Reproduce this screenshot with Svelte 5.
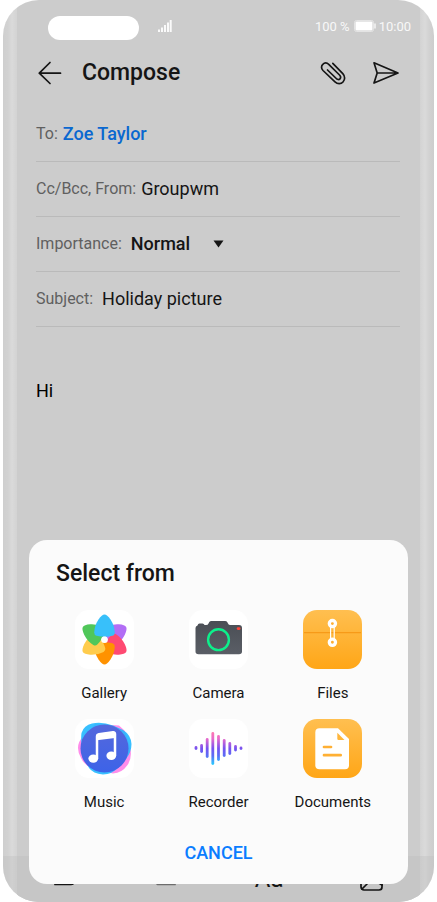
<script>
  let to = $state('Zoe Taylor');
  let from = $state('Groupwm');
  let importance = $state('Normal');
  let subject = $state('Holiday picture');
  let body = $state('Hi');

  const petals = [
    ['#b26ef5', 60],
    ['#ff4a72', 120],
    ['#ff9200', 180],
    ['#ffcc4d', 240],
    ['#50c75a', 300],
    ['#38c0fa', 0]
  ];

  const bars = [
    [7, 28, 30],
    [12.6, 26, 33],
    [18.2, 20, 38],
    [23.8, 14, 45],
    [29.5, 17, 41],
    [35.2, 21, 37],
    [40.8, 24, 35],
    [46.5, 27, 31.5],
    [52, 28.5, 30]
  ];

  const apps = ['Gallery', 'Camera', 'Files', 'Music', 'Recorder', 'Documents'];
</script>

<main class="phone">
  <div class="status">
    <span class="island"></span>
    <svg class="signal" width="14" height="12" viewBox="0 0 14 12" aria-hidden="true">
      <path d="M1 9.500V12M4 7.500V12M7 5V12M10 2.500V12M12.700 0V12" stroke="#fafafa" stroke-width="2" />
    </svg>
    <span class="percent">100 %</span>
    <svg class="battery" width="22" height="12" viewBox="0 0 22 12" aria-hidden="true">
      <rect x=".5" y=".5" width="19" height="11" rx="2" fill="none" stroke="#e4e4e4" />
      <rect x="1.500" y="1.500" width="17" height="9" rx="1" fill="#fff" />
      <path d="M21 3.500v5" stroke="#f4f4f4" stroke-width="1.500" />
    </svg>
    <span>10:00</span>
  </div>

  <header>
    <button class="icon" aria-label="Back">
      <svg width="26" height="26" viewBox="0 0 26 26"><path d="M14 2.500 3.300 13.200 14 23.500M3.300 13.200H24.500" /></svg>
    </button>
    <h1>Compose</h1>
    <button class="icon" aria-label="Attach">
      <svg width="26" height="26" viewBox="0 0 26 26">
        <path d="M12.800 3.300 22.800 13.600C25.400 16.400 25 20 23 22 21 24.200 17.500 24.200 15 21.900L3 10.500C1 8.500 1.200 5.800 2.800 4.300 4.400 2.700 7 2.700 9 4.600L19.500 15C21 16.500 20.900 18 20 18.900 19 19.900 17.500 19.700 16.300 18.500L7.500 10" />
      </svg>
    </button>
    <button class="icon" aria-label="Send">
      <svg width="28" height="26" viewBox="0 0 28 26"><path d="M2 2.800 26 13 2 23 5.200 13ZM5.200 13H26" /></svg>
    </button>
  </header>

  <form>
    <div class="row">
      <label for="to">To:</label>
      <input id="to" class="contact" bind:value={to} />
    </div>
    <div class="row">
      <label for="from">Cc/Bcc, From:</label>
      <input id="from" bind:value={from} />
    </div>
    <div class="row wide">
      <label for="importance">Importance:</label>
      <span class="picker">
        <select id="importance" bind:value={importance}>
          <option>Normal</option>
          <option>High</option>
          <option>Low</option>
        </select>
        <svg width="11" height="8" viewBox="0 0 11 8" aria-hidden="true"><path d="M.5 .5h10L5.500 7.500Z" fill="#151515" /></svg>
      </span>
    </div>
    <div class="row wide">
      <label for="subject">Subject:</label>
      <input id="subject" bind:value={subject} />
    </div>
    <textarea aria-label="Message" bind:value={body}></textarea>
  </form>

  <nav>
    <button aria-label="Folder">
      <svg width="26" height="26" viewBox="0 0 26 26"><path d="M3 24.500H19Q22 24.500 22 21V5H3Z" /></svg>
    </button>
    <button class="dim" aria-label="Copy">
      <svg width="26" height="26" viewBox="0 0 26 26"><path d="M22 24.500H6Q3 24.500 3 21V5H22Z" /></svg>
    </button>
    <button class="format">Aa</button>
    <button aria-label="Picture">
      <svg width="26" height="32" viewBox="0 0 26 32"><rect x="2" y="9" width="21" height="21" rx="3" /><path d="M3 29 13 19 23 25" /></svg>
    </button>
  </nav>

  <section class="sheet" role="dialog" aria-labelledby="sheet-title">
    <h2 id="sheet-title">Select from</h2>
    <div class="apps">
      {#each apps as app}
        <button class="app">
          <svg viewBox="0 0 59 59" aria-hidden="true">
            <defs>
              <linearGradient id="amber" x2="0" y2="1"><stop stop-color="#ffbf50" /><stop offset="1" stop-color="#ffa617" /></linearGradient>
              <linearGradient id="slate" x2="0" y2="1"><stop stop-color="#4a4e55" /><stop offset="1" stop-color="#5a5e66" /></linearGradient>
              <linearGradient id="indigo" x2="0" y2="1"><stop stop-color="#5568dc" /><stop offset="1" stop-color="#3d63e8" /></linearGradient>
              <linearGradient id="wave" gradientUnits="userSpaceOnUse" x1="0" y1="13" x2="0" y2="46">
                <stop stop-color="#ff79b0" /><stop offset=".2" stop-color="#e86bcb" /><stop offset=".5" stop-color="#7653f0" /><stop offset=".72" stop-color="#5b6df5" /><stop offset="1" stop-color="#26d0ff" />
              </linearGradient>
            </defs>
            <rect width="59" height="59" rx="14" fill={app === 'Files' || app === 'Documents' ? 'url(#amber)' : '#fff'} />
            {#if app === 'Gallery'}
              {#each petals as [fill, angle]}
                <path {fill} transform="rotate({angle} 29.500 29.500)" d="M29.500 4.500Q32 4.500 35.500 9.500 39.500 15.500 39.800 22.500 39.800 25 37.500 25.800 29.500 27.800 21.500 25.800 19.200 25 19.200 22.500 19.500 15.500 23.500 9.500 27 4.500 29.500 4.500Z" />
              {/each}
              <circle cx="29.500" cy="29.700" r="3.300" fill="#fff" />
            {:else if app === 'Camera'}
              <path fill="url(#slate)" d="M8.500 15.500Q9 13.500 10.500 13.500H13.500Q15 13.500 15.500 15H17Q19 15 19.500 13.500L20.300 12Q20.800 11 22.500 11H36Q37.700 11 38.200 12L39 13.500Q39.600 15 41.500 15H50Q53 15 53 18V41.500Q53 44.300 50 44.300H9.500Q6.500 44.300 6.500 41.500V18Q6.500 16 8.500 15.500Z" />
              <circle cx="29.500" cy="29.700" r="10.400" fill="none" stroke="#0df08b" stroke-width="2.400" />
              <rect x="47.700" y="17.300" width="3.800" height="2.600" rx="1.300" fill="#ff453a" />
            {:else if app === 'Files'}
              <path d="M1 22.600H58" stroke="#f79a18" stroke-width="1.200" />
              <path d="M27.600 14V32M31.200 14V32" stroke="#fff" stroke-width="1.200" />
              <g fill="#ffae31" stroke="#fff" stroke-width="3.300"><circle cx="29.400" cy="13.600" r="3.100" /><circle cx="29.400" cy="32.300" r="3.100" /></g>
            {:else if app === 'Music'}
              <path fill="#ff8dea" d="M3 29Q3 22 9 17L20 5 44 6.500 50 12 55.500 30Q57 40 52.500 46 47 54 38 54.500L18 50Q9 46 6 39 3 34 3 29Z" />
              <path fill="#24b9ff" d="M6.500 14Q9 6 17 4.500 27 2.500 38 6.500L48 11Q56 16 56.500 25 56.500 33 51 40L44 48Q37 55.500 28 55.500 18 54.500 14 49L7.500 34Q5.500 20 6.500 14Z" fill-opacity=".9" />
              <circle cx="29.500" cy="29.500" r="24" fill="url(#indigo)" />
              <ellipse cx="18.300" cy="39.600" rx="4.900" ry="4.200" fill="#fff" /><ellipse cx="36.300" cy="36.800" rx="4.900" ry="4.200" fill="#fff" />
              <path d="M22 39.500V17.500Q22 15.500 24 15.200L38 13.300Q40 13.100 40 15V36.500" fill="none" stroke="#fff" stroke-width="2.500" />
              <path d="M22 17Q22 14.800 24 14.500L38 12.700Q40 12.500 40 15V19L22 21.300Z" fill="#fff" />
            {:else if app === 'Recorder'}
              {#each bars as [x, top, bottom]}
                <rect x={x - 1.4} y={top - 1} width="2.800" height={bottom - top + 2} rx="1.400" fill="url(#wave)" />
              {/each}
            {:else}
              <path fill="#fff" d="M16.500 9.200H35L46 20V46.200Q46 50.300 42 50.300H16.500Q12.300 50.300 12.300 46.200V13.400Q12.300 9.200 16.500 9.200Z" />
              <path fill="#ffb63b" d="M34.300 13.800 41.500 21H35.500Q34.300 21 34.300 19.800Z" />
              <path d="M21 28H28M21 36.200H37.700" stroke="#ffb034" stroke-width="2.700" stroke-linecap="round" />
            {/if}
          </svg>
          <span>{app}</span>
        </button>
      {/each}
    </div>
    <button class="cancel">CANCEL</button>
  </section>
</main>

<style>
  :global(body) {
    background: #fff;
  }
  .phone,
  .phone * {
    box-sizing: border-box;
    font-family: Roboto, 'Liberation Sans', sans-serif;
  }
  .phone {
    position: relative;
    display: flex;
    flex-direction: column;
    min-height: 100vh;
    margin: 0 3px;
    overflow: hidden;
    border-radius: 36px;
    color: #151515;
    background:
      linear-gradient(90deg, #cfcfcf, #d2d2d2 5px, #dadada 9px, #d3d3d3 14px, transparent 14px),
      linear-gradient(270deg, #cdcdcd, #d2d2d2 5px, #dadada 9px, #d3d3d3 14px, transparent 14px),
      #cccccc;
  }
  button,
  input,
  select,
  textarea {
    margin: 0;
    padding: 0;
    border: 0;
    outline: 0;
    background: none;
    color: inherit;
  }
  .status {
    display: flex;
    align-items: center;
    height: 52px;
    padding: 0 23px 0 45px;
    font-size: 13px;
    color: #f8f8f8;
  }
  .island {
    width: 91px;
    height: 24px;
    margin: 4px 19px 0 0;
    border-radius: 12px;
    background: #fff;
  }
  .percent {
    margin-left: auto;
  }
  .battery {
    margin: 0 3px 0 4px;
  }
  header {
    display: flex;
    align-items: center;
    height: 42px;
    padding: 0 34px 0 33px;
  }
  h1 {
    flex: 1;
    margin: 0 0 0 20px;
    font-size: 23px;
    line-height: 28px;
    font-weight: 500;
  }
  .icon {
    display: flex;
  }
  .icon + .icon {
    margin-left: 26px;
  }
  .icon path,
  nav svg {
    fill: none;
    stroke: #151515;
    stroke-width: 1.7;
    stroke-linecap: round;
    stroke-linejoin: round;
  }
  form {
    display: flex;
    flex: 1;
    flex-direction: column;
    padding: 13px 34px 0 33px;
  }
  .row {
    display: flex;
    align-items: center;
    gap: 5px;
    height: 55px;
    border-bottom: 1px solid #bababa;
  }
  .wide {
    gap: 9px;
  }
  label {
    font-size: 16px;
    line-height: 24px;
    color: #606060;
  }
  input {
    flex: 1;
    min-width: 0;
    font-size: 18px;
    line-height: 24px;
  }
  .contact,
  select {
    font-size: 18px;
    font-weight: 500;
  }
  .contact {
    color: #0a68d0;
  }
  .picker {
    display: flex;
    align-items: center;
    gap: 22px;
  }
  select {
    appearance: none;
    line-height: 24px;
  }
  textarea {
    flex: 1;
    resize: none;
    padding-top: 52px;
    font-size: 18px;
    line-height: 24px;
    color: #000;
  }
  nav {
    display: flex;
    justify-content: space-between;
    height: 46px;
    padding: 4px 49px 0 49px;
    background: linear-gradient(90deg, transparent 14px, #c6c6c6 14px, #c6c6c6 calc(100% - 14px), transparent calc(100% - 14px)), rgba(190, 190, 190, 0.35);
  }
  nav button {
    display: flex;
    align-items: flex-start;
  }
  .dim {
    opacity: 0.5;
  }
  .format {
    font-size: 24px;
    line-height: 38px;
    font-weight: 400;
  }
  .sheet {
    position: absolute;
    right: 26px;
    bottom: 18px;
    left: 26px;
    padding: 20px 18px 17px;
    border-radius: 18px;
    background: #fbfbfb;
  }
  h2 {
    margin: 0 0 22px 9px;
    font-size: 23px;
    line-height: 28px;
    font-weight: 500;
  }
  .apps {
    display: grid;
    grid-template-columns: repeat(3, 1fr);
    row-gap: 16px;
  }
  .app {
    display: flex;
    flex-direction: column;
    align-items: center;
    gap: 14px;
    font-size: 15px;
    line-height: 20px;
  }
  .app svg {
    width: 59px;
    height: 59px;
  }
  .cancel {
    display: block;
    margin: 27px auto 0;
    font-size: 18px;
    line-height: 28px;
    font-weight: 500;
    color: #0a7dff;
  }
</style>
